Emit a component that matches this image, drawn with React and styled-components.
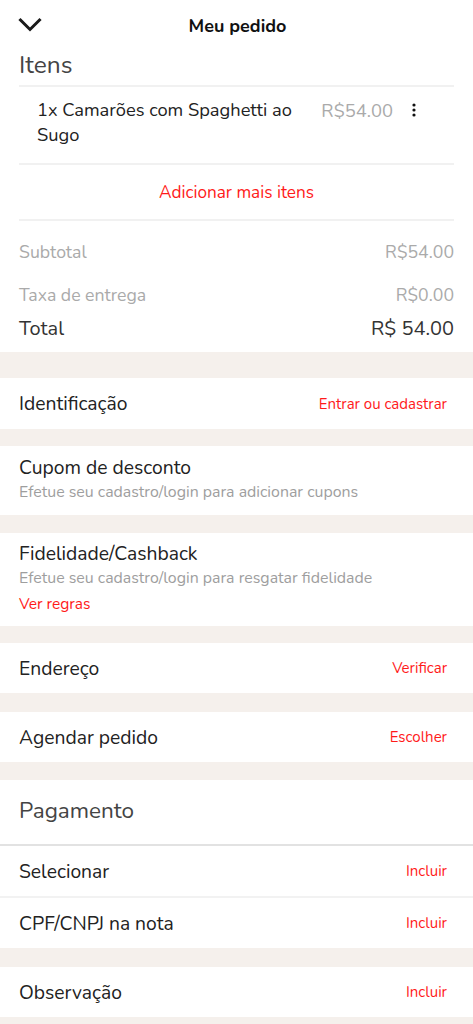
import React from "react";
import styled, { createGlobalStyle } from "styled-components";

const Global = createGlobalStyle`
  html, body { margin: 0; padding: 0; background: #f5f0ec; }
  body { font-family: "Nunito", "Lato", "Noto Sans", sans-serif; color: #222; }
  * { box-sizing: border-box; }
`;

const Page = styled.div`
  width: 473px;
  display: flex;
  flex-direction: column;
  background: #f5f0ec;
  padding-bottom: 40px;
`;

const Block = styled.section`
  background: #fff;
  margin-bottom: ${(p) => p.$gap || 17}px;
`;

const Header = styled.header`
  height: 52px;
  display: flex;
  align-items: center;
  justify-content: center;
  position: relative;
`;

const BackBtn = styled.button`
  position: absolute;
  left: 17px;
  top: 15px;
  border: 0;
  background: none;
  padding: 0;
  width: 26px;
  height: 20px;
  display: flex;
  align-items: center;
  justify-content: center;
`;

const Title = styled.h1`
  margin: 0;
  font-size: 18px;
  font-weight: 700;
  color: #111;
  padding-left: 2px;
`;

const Inner = styled.div`
  padding: 0 19px;
`;

const SectionTitle = styled.h2`
  margin: 0;
  font-size: ${(p) => p.$size || 24.5}px;
  font-weight: 400;
  color: #444;
  line-height: ${(p) => p.$h || 26}px;
  padding: 0 0 ${(p) => p.$pb || 0}px 19px;
`;

const Divider = styled.hr`
  margin: 0;
  border: 0;
  height: 2px;
  background: ${(p) => p.$color || "#f1f1f1"};
`;

const ItemRow = styled.div`
  display: flex;
  align-items: flex-start;
  padding: 11px 0 0 18px;
  height: 76px;
`;

const ItemName = styled.div`
  flex: 0 0 270px;
  font-size: 18.3px;
  line-height: 25px;
  color: #222;
`;

const ItemPrice = styled.div`
  font-size: 18.4px;
  line-height: 25px;
  color: #aaa;
  margin-left: 10px;
  width: 76px;
  text-align: right;
`;

const MoreBtn = styled.button`
  border: 0;
  background: none;
  padding: 5px 10px;
  margin-left: 9px;
  display: flex;
`;

const AddMore = styled.div`
  height: 54px;
  display: flex;
  align-items: center;
  justify-content: center;
  color: #ff1a1a;
  font-size: 17.2px;
`;

const Totals = styled.div`
  padding: 10px 19px 13px 19px;
  display: flex;
  flex-direction: column;
`;

const TotalRow = styled.div`
  display: flex;
  justify-content: space-between;
  align-items: center;
  height: ${(p) => p.$h || 44}px;
  font-size: ${(p) => (p.$strong ? 20 : 17.7)}px;
  color: ${(p) => (p.$strong ? "#333" : "#aaa")};
`;

const Row = styled.div`
  display: flex;
  justify-content: space-between;
  align-items: center;
  height: ${(p) => p.$h || 50}px;
  padding: 0 26px 0 19px;
`;

const RowTitle = styled.div`
  font-size: 19.3px;
  color: #222;
`;

const Action = styled.span`
  font-size: 15px;
  color: #ff1a1a;
`;

const Stack = styled.div`
  padding: ${(p) => p.$pad || "10px 19px 10px"};
  display: flex;
  flex-direction: column;
`;

const StackTitle = styled.div`
  font-size: 19.3px;
  color: #222;
  line-height: 24px;
`;

const Sub = styled.div`
  font-size: 15.9px;
  color: #9e9e9e;
  line-height: 25px;
`;

const RedLink = styled.div`
  font-size: 15.5px;
  color: #ff1a1a;
  line-height: 25px;
`;

const PayHead = styled.div`
  height: 64px;
  display: flex;
  align-items: center;
  padding-bottom: 2px;
`;

const Chevron = () => (
  <svg width="24" height="16" viewBox="0 0 24 16">
    <path d="M2.5 3 L12 12.5 L21.5 3" fill="none" stroke="#1a1a1a" strokeWidth="3" strokeLinecap="square" />
  </svg>
);

const Dots = () => (
  <svg width="4" height="14" viewBox="0 0 4 14">
    <circle cx="2" cy="2" r="1.6" fill="#111" />
    <circle cx="2" cy="7" r="1.6" fill="#111" />
    <circle cx="2" cy="12" r="1.6" fill="#111" />
  </svg>
);

export default function App() {
  return (
    <>
      <Global />
      <Page>
        <Block $gap={26}>
          <Header>
            <BackBtn aria-label="Voltar"><Chevron /></BackBtn>
            <Title>Meu pedido</Title>
          </Header>
          <SectionTitle $pb={7}>Itens</SectionTitle>
          <Inner>
            <Divider />
            <ItemRow>
              <ItemName>1x Camarões com Spaghetti ao Sugo</ItemName>
              <ItemPrice>R$54.00</ItemPrice>
              <MoreBtn aria-label="Mais"><Dots /></MoreBtn>
            </ItemRow>
            <Divider />
            <AddMore>Adicionar mais itens</AddMore>
            <Divider />
          </Inner>
          <Totals>
            <TotalRow $h={42}><span>Subtotal</span><span>R$54.00</span></TotalRow>
            <TotalRow $h={44}><span>Taxa de entrega</span><span>R$0.00</span></TotalRow>
            <TotalRow $h={22} $strong><span>Total</span><span>R$ 54.00</span></TotalRow>
          </Totals>
        </Block>

        <Block>
          <Row $h={51}><RowTitle>Identificação</RowTitle><Action>Entrar ou cadastrar</Action></Row>
        </Block>

        <Block $gap={18}>
          <Stack $pad="10px 19px 10px">
            <StackTitle>Cupom de desconto</StackTitle>
            <Sub>Efetue seu cadastro/login para adicionar cupons</Sub>
          </Stack>
        </Block>

        <Block>
          <Stack $pad="9px 19px 10px">
            <StackTitle>Fidelidade/Cashback</StackTitle>
            <Sub>Efetue seu cadastro/login para resgatar fidelidade</Sub>
            <RedLink>Ver regras</RedLink>
          </Stack>
        </Block>

        <Block $gap={19}>
          <Row><RowTitle>Endereço</RowTitle><Action>Verificar</Action></Row>
        </Block>

        <Block $gap={18}>
          <Row><RowTitle>Agendar pedido</RowTitle><Action>Escolher</Action></Row>
        </Block>

        <Block $gap={19}>
          <PayHead>
            <SectionTitle $size={22.5} $h={30}>Pagamento</SectionTitle>
          </PayHead>
          <Divider $color="#e2e2e2" />
          <Row><RowTitle>Selecionar</RowTitle><Action>Incluir</Action></Row>
          <Divider $color="#f2f2f2" />
          <Row><RowTitle>CPF/CNPJ na nota</RowTitle><Action>Incluir</Action></Row>
        </Block>

        <Block>
          <Row><RowTitle>Observação</RowTitle><Action>Incluir</Action></Row>
        </Block>
      </Page>
    </>
  );
}
